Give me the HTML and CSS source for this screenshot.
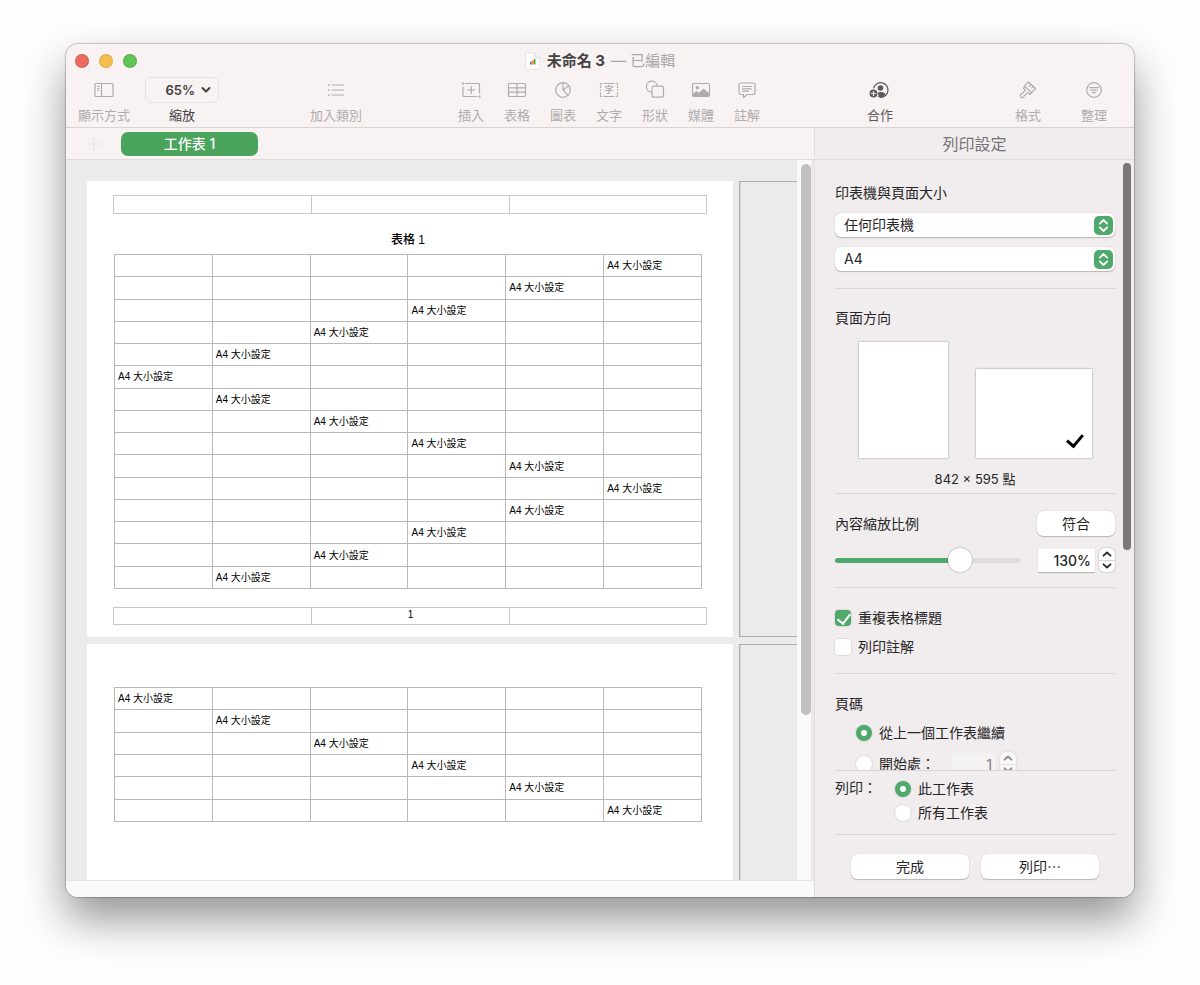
FILE: index.html
```html
<!DOCTYPE html>
<html lang="zh-Hant">
<head>
    <meta charset="UTF-8">
    <meta name="viewport" content="width=device-width, initial-scale=1.0">
    <title>未命名3</title>
    <link rel="stylesheet" href="styles.css">
</head>
<body>
    <div class="window">
        <header class="toolbar">
            <div class="title-row">
                <div class="lights">
                    <button class="light red" aria-label="關閉"></button>
                    <button class="light yellow" aria-label="縮到最小"></button>
                    <button class="light green" aria-label="全螢幕"></button>
                </div>
                <h1 class="title">
                    <svg class="doc-icon" width="16" height="18" viewBox="0 0 16 18">
                        <path d="M1 1h9l5 5v11H1z" fill="#fff" stroke="#ddd8d8" stroke-width=".7"/>
                        <path d="M10 1v5h5" fill="#f0eded" stroke="#ddd8d8" stroke-width=".7"/>
                        <path d="M5 12.500V10.600L6.300 9.600V12.500z" fill="#3a7bd8"/>
                        <path d="M6.300 12.500V9.400l1.300-1V12.500z" fill="#e8453c"/>
                        <path d="M7.600 12.500V8.200L9 7v5.500z" fill="#f5a623"/>
                        <path d="M9 12.500V6.500l1.500 1v5z" fill="#3fae49"/>
                    </svg>
                    <span class="name">未命名 3</span>
                    <span class="state">— 已編輯</span>
                </h1>
            </div>
            <div class="tools">
                <button class="tool view">
                    <svg class="icon" viewBox="0 0 24 24"><path d="M4 5.500h16a1 1 0 0 1 1 1v11a1 1 0 0 1-1 1H4a1 1 0 0 1-1-1v-11a1 1 0 0 1 1-1zM9.500 5.500v13M5.500 8.500h1.500M5.500 10.500h1.500M5.500 12.500h1.500"/></svg>
                    <span>顯示方式</span>
                </button>
                <button class="tool zoom">
                    <span class="zoom-box">65%
                        <svg width="10" height="8" viewBox="0 0 10 8"><path d="M1.500 2l3.500 3.500L8.500 2"/></svg>
                    </span>
                    <span>縮放</span>
                </button>
                <button class="tool category">
                    <svg class="icon" viewBox="0 0 24 24"><path d="M8 7h11.500M8 12h11.500M8 17h11.500"/><path class="solid" d="M4 6.200h1.600v1.600H4zM4 11.200h1.600v1.600H4zM4 16.200h1.600v1.600H4z"/></svg>
                    <span>加入類別</span>
                </button>
                <div class="tool-group">
                    <button class="tool">
                        <svg class="icon" viewBox="0 0 24 24"><path d="M6 5.500h13.500a1 1 0 0 1 1 1V15M18 18.500H5a1 1 0 0 1-1-1V9M12.300 8.500v7M8.800 12h7"/><path class="solid" d="M3 4.500h2v2H3zM19.500 17.500h2v2h-2z"/></svg>
                        <span>插入</span>
                    </button>
                    <button class="tool">
                        <svg class="icon" viewBox="0 0 24 24"><path d="M4.500 5.500h15a1 1 0 0 1 1 1v11a1 1 0 0 1-1 1h-15a1 1 0 0 1-1-1v-11a1 1 0 0 1 1-1zM3.500 9.800h17M3.500 14.200h17M12 5.500v13"/></svg>
                        <span>表格</span>
                    </button>
                    <button class="tool">
                        <svg class="icon" viewBox="0 0 24 24"><circle cx="12" cy="12" r="7.300"/><path d="M12 4.700V12l5 5.200M12 12l5.800-4.200"/></svg>
                        <span>圖表</span>
                    </button>
                    <button class="tool">
                        <svg class="icon" viewBox="0 0 24 24"><path d="M7 5.500h10M7 18.500h10M3.500 9.500V8M3.500 14.500V16M20.500 9.500V8M20.500 14.500V16M3.500 11.800v.4M20.500 11.800v.4"/><path d="M3.500 6.500V6a.5.5 0 0 1 .5-.5h.8M19.200 5.500h.8a.5.5 0 0 1 .5.500v.5M3.500 17.500v.5a.5.5 0 0 0 .5.500h.8M19.200 18.500h.8a.5.5 0 0 0 .5-.5v-.5"/><text x="12" y="15.300" text-anchor="middle" class="glyph">字</text></svg>
                        <span>文字</span>
                    </button>
                    <button class="tool">
                        <svg class="icon" viewBox="0 0 24 24"><path d="M8.500 14.200A5.500 5.500 0 1 1 14.300 8"/><rect x="9" y="8.200" width="11.500" height="11" rx="2"/></svg>
                        <span>形狀</span>
                    </button>
                    <button class="tool">
                        <svg class="icon" viewBox="0 0 24 24"><rect x="3.500" y="5.500" width="17" height="13" rx="1.200"/><circle class="solid" cx="8.300" cy="9.700" r="1.700"/><path class="solid" d="M4 15.500l3.500-2.500 2.500 1.800 4.500-4.300 6 5V18.500H4z"/></svg>
                        <span>媒體</span>
                    </button>
                    <button class="tool">
                        <svg class="icon" viewBox="0 0 24 24"><path d="M6 5h12a2 2 0 0 1 2 2v7.500a2 2 0 0 1-2 2h-5.800L8.500 19.500v-3H6a2 2 0 0 1-2-2V7a2 2 0 0 1 2-2zM7.500 8.500h9M7.500 10.800h9M7.500 13.200h6"/></svg>
                        <span>註解</span>
                    </button>
                </div>
                <button class="tool active share">
                    <svg class="icon" viewBox="0 0 24 24"><path d="M5.700 10A7.300 7.300 0 1 1 12.500 19.300"/><circle class="solid" cx="12.500" cy="10" r="2.800"/><path class="solid" d="M9.800 19c.9-1.300.7-2.800-.1-4.200 1.700-1.200 5.600-1.200 7.800 1.200a7 7 0 0 1-7.700 3z"/><circle class="solid" cx="5.500" cy="15.500" r="3.900"/><path class="plus" d="M5.500 13.500v4M3.500 15.500h4"/></svg>
                    <span>合作</span>
                </button>
                <button class="tool format">
                    <svg class="icon" viewBox="0 0 24 24"><path d="M12.500 4l7 6.500-3.800 4.200-7.300-6.600zM8.400 8.100l-.8 2.400 1.900 1.900-4.800 4.400a1.700 1.700 0 0 0 2.400 2.400l4.600-4.600 2 1.700 2-1.600M14.800 6.200l-1.600 2M17 8.300l-1.300 1.500"/></svg>
                    <span>格式</span>
                </button>
                <button class="tool organize">
                    <svg class="icon" viewBox="0 0 24 24"><circle cx="12" cy="12" r="7.300"/><path d="M7.500 9.700h9M8.800 12.200h6.400M10.300 14.700h3.400"/></svg>
                    <span>整理</span>
                </button>
            </div>
        </header>

        <div class="content">
            <main class="workspace">
                <nav class="tabs">
                    <button class="add-sheet" aria-label="加入工作表">
                        <svg width="14" height="14" viewBox="0 0 14 14"><path d="M7 1v12M1 7h12"/></svg>
                    </button>
                    <button class="sheet-tab">工作表 1</button>
                </nav>
                <div class="scroller">
                    <div class="canvas">
                        <section class="page">
                            <div class="strip"><div></div><div></div><div></div></div>
                            <table class="grid">
                                <caption>表格 1</caption>
                                <tr><td></td><td></td><td></td><td></td><td></td><td>A4 大小設定</td></tr>
                                <tr><td></td><td></td><td></td><td></td><td>A4 大小設定</td><td></td></tr>
                                <tr><td></td><td></td><td></td><td>A4 大小設定</td><td></td><td></td></tr>
                                <tr><td></td><td></td><td>A4 大小設定</td><td></td><td></td><td></td></tr>
                                <tr><td></td><td>A4 大小設定</td><td></td><td></td><td></td><td></td></tr>
                                <tr><td>A4 大小設定</td><td></td><td></td><td></td><td></td><td></td></tr>
                                <tr><td></td><td>A4 大小設定</td><td></td><td></td><td></td><td></td></tr>
                                <tr><td></td><td></td><td>A4 大小設定</td><td></td><td></td><td></td></tr>
                                <tr><td></td><td></td><td></td><td>A4 大小設定</td><td></td><td></td></tr>
                                <tr><td></td><td></td><td></td><td></td><td>A4 大小設定</td><td></td></tr>
                                <tr><td></td><td></td><td></td><td></td><td></td><td>A4 大小設定</td></tr>
                                <tr><td></td><td></td><td></td><td></td><td>A4 大小設定</td><td></td></tr>
                                <tr><td></td><td></td><td></td><td>A4 大小設定</td><td></td><td></td></tr>
                                <tr><td></td><td></td><td>A4 大小設定</td><td></td><td></td><td></td></tr>
                                <tr><td></td><td>A4 大小設定</td><td></td><td></td><td></td><td></td></tr>
                            </table>
                            <div class="strip foot"><div></div><div>1</div><div></div></div>
                        </section>
                        <div class="next-page"></div>
                        <section class="page second">
                            <table class="grid short">
                                <tr><td>A4 大小設定</td><td></td><td></td><td></td><td></td><td></td></tr>
                                <tr><td></td><td>A4 大小設定</td><td></td><td></td><td></td><td></td></tr>
                                <tr><td></td><td></td><td>A4 大小設定</td><td></td><td></td><td></td></tr>
                                <tr><td></td><td></td><td></td><td>A4 大小設定</td><td></td><td></td></tr>
                                <tr><td></td><td></td><td></td><td></td><td>A4 大小設定</td><td></td></tr>
                                <tr><td></td><td></td><td></td><td></td><td></td><td>A4 大小設定</td></tr>
                            </table>
                        </section>
                        <div class="next-page"></div>
                    </div>
                    <div class="gutter"><div class="thumb"></div></div>
                </div>
                <div class="bottom-bar"></div>
            </main>

            <aside class="panel">
                <h2 class="panel-title">列印設定</h2>
                <div class="settings">
                    <section class="printer">
                        <label class="heading" for="printer">印表機與頁面大小</label>
                        <div class="select-box">
                            <select id="printer"><option>任何印表機</option></select>
                            <svg class="arrows" viewBox="0 0 19 19"><path d="M5.800 7.600L9.500 4l3.700 3.600M5.800 11.400L9.500 15l3.700-3.600"/></svg>
                        </div>
                        <div class="select-box">
                            <select aria-label="頁面大小"><option>A4</option></select>
                            <svg class="arrows" viewBox="0 0 19 19"><path d="M5.800 7.600L9.500 4l3.700 3.600M5.800 11.400L9.500 15l3.700-3.600"/></svg>
                        </div>
                    </section>
                    <section class="orientation">
                        <h3 class="heading">頁面方向</h3>
                        <div class="papers">
                            <input class="paper portrait" type="radio" name="paper" aria-label="直向">
                            <input class="paper landscape" type="radio" name="paper" aria-label="橫向" checked>
                        </div>
                        <p class="size">842 × 595 點</p>
                    </section>
                    <section class="scale">
                        <div class="row">
                            <label class="heading" for="scale">內容縮放比例</label>
                            <button class="btn fit">符合</button>
                        </div>
                        <div class="row">
                            <input class="slider" id="scale" type="range" min="10" max="182" value="130">
                            <div class="number">
                                <input class="field" type="text" value="130%" aria-label="縮放百分比">
                                <span class="stepper">
                                    <button aria-label="增加"><svg viewBox="0 0 10 6"><path d="M1.500 4.700L5 1.500l3.500 3.200"/></svg></button>
                                    <button aria-label="減少"><svg viewBox="0 0 10 6"><path d="M1.500 1.300L5 4.500l3.500-3.200"/></svg></button>
                                </span>
                            </div>
                        </div>
                    </section>
                    <section class="options">
                        <label class="choice"><input class="check" type="checkbox" checked>重複表格標題</label>
                        <label class="choice"><input class="check" type="checkbox">列印註解</label>
                    </section>
                    <section class="numbering">
                        <h3 class="heading">頁碼</h3>
                        <label class="choice"><input class="radio" type="radio" name="start" checked>從上一個工作表繼續</label>
                        <div class="start-row">
                            <label class="choice"><input class="radio" type="radio" name="start">開始處：</label>
                            <div class="number disabled">
                                <input class="field" type="text" value="1" aria-label="開始頁碼" disabled>
                                <span class="stepper">
                                    <button aria-label="增加" disabled><svg viewBox="0 0 10 6"><path d="M1.500 4.700L5 1.500l3.500 3.200"/></svg></button>
                                    <button aria-label="減少" disabled><svg viewBox="0 0 10 6"><path d="M1.500 1.300L5 4.500l3.500-3.200"/></svg></button>
                                </span>
                            </div>
                        </div>
                    </section>
                    <div class="panel-thumb"></div>
                </div>
                <footer class="panel-footer">
                    <div class="print-what">
                        <span class="heading">列印：</span>
                        <div class="what-list">
                            <label class="choice"><input class="radio" type="radio" name="what" checked>此工作表</label>
                            <label class="choice"><input class="radio" type="radio" name="what">所有工作表</label>
                        </div>
                    </div>
                    <div class="actions">
                        <button class="btn">完成</button>
                        <button class="btn">列印⋯</button>
                    </div>
                </footer>
            </aside>
        </div>
    </div>
</body>
</html>
```
FILE: styles.css
```css
* {
    box-sizing: border-box;
}

body {
    margin: 0;
    padding: 44px 66px 88px;
    height: 100vh;
    display: flex;
    background-color: #fefefe;
    color: #272526;
    font-family: Inter, "Noto Sans CJK TC", sans-serif;
    font-size: 14px;
    line-height: 20px;
}

h1, h2, h3, p {
    margin: 0;
    font-weight: 400;
}

button, input, select {
    font: inherit;
    color: inherit;
    margin: 0;
}

button {
    border: none;
    background: none;
    padding: 0;
}

svg {
    fill: none;
    stroke: currentColor;
    stroke-linecap: round;
    stroke-linejoin: round;
}

.window {
    flex: 1;
    min-width: 0;
    display: flex;
    flex-direction: column;
    border-radius: 12px;
    overflow: hidden;
    background-color: #f8f2f3;
    box-shadow: 0 0 1px 1px rgba(0, 0, 0, 0.2), 0 22px 44px rgba(0, 0, 0, 0.42);
}

/* toolbar */
.toolbar {
    border-bottom: 1px solid #d9d3d4;
    height: 84px;
}

.title-row {
    display: grid;
    grid-template-columns: 1fr auto 1fr;
    align-items: center;
    height: 33px;
    padding: 0 9px;
}

.lights {
    display: flex;
    gap: 10px;
}

.light {
    width: 14px;
    height: 14px;
    border-radius: 50%;
    border: 1px solid rgba(0, 0, 0, 0.1);
}

.red {
    background-color: #ed6a5f;
}

.yellow {
    background-color: #f5bf4f;
}

.green {
    background-color: #61c555;
}

.title {
    display: flex;
    align-items: center;
    gap: 6px;
    font-size: 15px;
}

.name {
    font-weight: 700;
    color: #454142;
}

.state {
    color: #aaa5a6;
}

.doc-icon {
    stroke: none;
}

.tools {
    display: flex;
    padding: 0 27px 0 12px;
}

.tool {
    display: flex;
    flex-direction: column;
    align-items: center;
    gap: 2px;
    font-size: 13px;
    color: #b0abac;
}

.tool .icon {
    width: 24px;
    height: 24px;
    margin: 1px 0;
    stroke-width: 1.2;
}

.solid {
    fill: currentColor;
    stroke: none;
}

.glyph {
    fill: currentColor;
    stroke: none;
    font-size: 9px;
    font-weight: 700;
}

.plus {
    stroke: #f8f2f3;
}

.active {
    color: #5d595a;
}

.zoom {
    margin-left: 15px;
    color: #454142;
}

.zoom-box {
    display: flex;
    justify-content: flex-end;
    align-items: center;
    gap: 6px;
    width: 74px;
    height: 26px;
    padding-right: 7px;
    border: 1px solid #e6e0e1;
    border-radius: 6px;
    font-weight: 600;
}

.zoom-box svg {
    stroke-width: 2;
}

.category {
    margin-left: 91px;
}

.tool-group {
    display: flex;
    margin-left: 86px;
}

.tool-group .tool {
    width: 46px;
}

.share {
    margin-left: 97px;
}

.format {
    margin-left: auto;
}

.organize {
    margin-left: 40px;
}

/* document area */
.content {
    flex: 1;
    min-height: 0;
    display: flex;
}

.workspace {
    flex: 1;
    min-width: 0;
    display: flex;
    flex-direction: column;
}

.tabs {
    display: flex;
    align-items: center;
    gap: 20px;
    height: 32px;
    padding-left: 21px;
    border-bottom: 1px solid #e0dadb;
}

.add-sheet {
    display: flex;
    color: #e6dfe4;
}

.sheet-tab {
    width: 137px;
    height: 24px;
    border-radius: 7px;
    background-color: #4ba45b;
    color: #fff;
    font-weight: 500;
}

.scroller {
    flex: 1;
    min-height: 0;
    display: flex;
}

.canvas {
    flex: 1;
    min-width: 0;
    display: grid;
    grid-template-columns: 1fr 58px;
    grid-auto-rows: 456px;
    gap: 7px 6px;
    padding: 21px 0 0 21px;
    overflow: hidden;
    background-color: #ebebeb;
}

.page {
    padding: 14px 26px 12px;
    background-color: #fff;
    color: #000;
    font-family: "Liberation Sans", "Noto Sans CJK TC", sans-serif;
}

.second {
    padding-top: 43px;
}

.next-page {
    border: 1px solid #adadad;
    border-right: none;
    box-shadow: inset 1px 0 #d4d4d4;
}

.strip {
    display: grid;
    grid-template-columns: repeat(3, 1fr);
    height: 19px;
    border: 1px solid #c8c8c8;
    font-size: 10px;
    line-height: 14px;
    text-align: center;
}

.strip div + div {
    border-left: 1px solid #c8c8c8;
}

.foot {
    height: 18px;
    margin-top: 18px;
}

.grid {
    width: calc(100% - 6px);
    height: 335px;
    margin-left: 1px;
    border-collapse: collapse;
    table-layout: fixed;
    font-size: 10px;
    line-height: 14px;
}

.short {
    height: 135px;
}

.grid caption {
    padding: 17px 0 5px;
    font-size: 12px;
    line-height: 18px;
    font-weight: 500;
}

.grid td {
    border: 1px solid #b8b8b8;
    padding: 1px 3px 0;
    white-space: nowrap;
}

.gutter {
    width: 17px;
    padding: 4px 4px 0;
    background-color: #fafafa;
    border-right: 3px solid #ebe9e9;
}

.thumb {
    width: 10px;
    height: 77%;
    border-radius: 5px;
    background-color: #c1c1c1;
}

.bottom-bar {
    height: 17px;
    border-top: 1px solid #e6e6e6;
    background-color: #fafafa;
}

/* print settings */
.panel {
    width: 320px;
    display: flex;
    flex-direction: column;
    border-left: 1px solid #e3dede;
    background-color: #f1edee;
}

.panel-title {
    height: 32px;
    line-height: 32px;
    border-bottom: 1px solid #e0dbdc;
    font-size: 16px;
    text-align: center;
    color: #777374;
}

.settings {
    position: relative;
    flex: 1;
    min-height: 0;
    overflow: hidden;
    padding: 0 19px 0 20px;
}

.settings section {
    border-bottom: 1px solid #d9d5d6;
}

.heading {
    display: block;
    font-size: 14px;
}

.printer {
    padding: 23px 0 17px;
}

.select-box {
    position: relative;
    margin-top: 10px;
}

.select-box select {
    display: block;
    width: 100%;
    height: 24px;
    padding: 0 9px;
    appearance: none;
    border: none;
    border-radius: 6px;
    background-color: #fff;
    box-shadow: 0 1px 1px rgba(0, 0, 0, 0.22), 0 0 1px rgba(0, 0, 0, 0.25);
}

.arrows {
    position: absolute;
    top: 3px;
    right: 2px;
    width: 19px;
    height: 19px;
    border-radius: 5px;
    background-color: #4ea96b;
    color: #fff;
    stroke-width: 1.8;
    pointer-events: none;
}

.orientation {
    padding: 19px 0 4px;
}

.papers {
    display: flex;
    justify-content: center;
    align-items: flex-end;
    gap: 28px;
    padding-top: 14px;
}

.paper {
    position: relative;
    appearance: none;
    background-color: #fff;
    box-shadow: 0 0 2px rgba(0, 0, 0, 0.4);
}

.portrait {
    width: 89px;
    height: 116px;
}

.landscape {
    width: 116px;
    height: 89px;
}

.paper:checked::after {
    content: "";
    position: absolute;
    right: 12px;
    bottom: 11px;
    width: 7px;
    height: 13px;
    border: solid #000;
    border-width: 0 3px 3px 0;
    transform: rotate(40deg);
}

.size {
    padding-top: 11px;
    font-size: 13px;
    text-align: center;
}

.scale {
    padding: 17px 0 15px;
}

.row {
    display: flex;
    align-items: center;
    justify-content: space-between;
}

.row + .row {
    margin-top: 12px;
}

.btn {
    height: 25px;
    border-radius: 6px;
    background-color: #fff;
    box-shadow: 0 1px 1px rgba(0, 0, 0, 0.22), 0 0 1px rgba(0, 0, 0, 0.25);
}

.fit {
    width: 78px;
}

.slider {
    width: 186px;
    height: 24px;
    appearance: none;
    background: none;
}

.slider::-webkit-slider-runnable-track {
    height: 5px;
    border-radius: 3px;
    background: linear-gradient(to right, #4ea96b 67%, #e0dcdd 67%);
}

.slider::-webkit-slider-thumb {
    appearance: none;
    width: 24px;
    height: 24px;
    margin-top: -10px;
    border-radius: 50%;
    background-color: #fff;
    box-shadow: 0 0 2px rgba(0, 0, 0, 0.4);
}

.number {
    display: flex;
    align-items: center;
    gap: 4px;
}

.field {
    width: 57px;
    height: 23px;
    padding: 0 4px;
    border: none;
    background-color: #fff;
    box-shadow: 0 1px 1px rgba(0, 0, 0, 0.22);
    font-size: 14px;
    font-weight: 500;
    text-align: right;
}

.stepper {
    display: flex;
    flex-direction: column;
    width: 16px;
    height: 24px;
    border-radius: 6px;
    background-color: #fff;
    box-shadow: 0 0 2px rgba(0, 0, 0, 0.35);
}

.stepper button {
    flex: 1;
    display: flex;
    align-items: center;
    justify-content: center;
}

.stepper button + button {
    border-top: 1px solid #dcd8d9;
}

.stepper svg {
    width: 10px;
    height: 6px;
    stroke-width: 1.8;
}

.disabled {
    opacity: 0.5;
}

.disabled .field {
    width: 45px;
    background-color: #faf8f8;
}

.choice {
    display: flex;
    align-items: center;
    gap: 7px;
}

.check, .radio {
    position: relative;
    width: 16px;
    height: 16px;
    appearance: none;
    background-color: #fff;
    box-shadow: 0 0 1px 1px rgba(0, 0, 0, 0.08);
}

.check {
    border-radius: 4px;
}

.radio {
    border-radius: 50%;
}

.check:checked {
    background-color: #4ea96b;
}

.check:checked::after {
    content: "";
    position: absolute;
    left: 5px;
    top: 1px;
    width: 6px;
    height: 11px;
    border: solid #fff;
    border-width: 0 2px 2px 0;
    transform: rotate(38deg);
}

.radio:checked {
    border: 5px solid #4ea96b;
}

.options {
    display: grid;
    gap: 9px;
    padding: 20px 0 16px;
}

.numbering {
    padding-top: 20px;
}

.numbering .choice {
    padding-left: 21px;
}

.numbering > .choice {
    margin-top: 9px;
}

.start-row {
    display: flex;
    align-items: center;
    gap: 16px;
    margin-top: 9px;
}

.panel-thumb {
    position: absolute;
    top: 3px;
    right: 3px;
    width: 8px;
    height: 387px;
    border-radius: 4px;
    background-color: #7a7778;
}

.panel-footer {
    margin: 0 19px 0 20px;
    border-top: 1px solid #d9d5d6;
}

.print-what {
    display: flex;
    gap: 18px;
    padding: 7px 0 11px;
    border-bottom: 1px solid #d9d5d6;
}

.what-list {
    display: grid;
    gap: 4px;
    padding-top: 1px;
}

.actions {
    display: flex;
    gap: 12px;
    padding: 19px 16px 18px;
}

.actions .btn {
    flex: 1;
}
```
